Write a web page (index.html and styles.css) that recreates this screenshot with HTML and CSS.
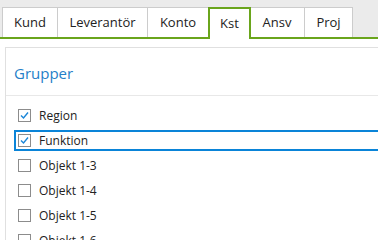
FILE: index.html
```html
<!DOCTYPE html>
<html lang="sv">
<head>
    <meta charset="UTF-8">
    <title>Grupper</title>
    <link rel="stylesheet" href="styles.css">
</head>
<body>
    <div class="flikar">
        <div class="flik">Kund</div>
        <div class="flik">Leverantör</div>
        <div class="flik">Konto</div>
        <div class="flik aktiv">Kst</div>
        <div class="flik">Ansv</div>
        <div class="flik">Proj</div>
    </div>
    <div class="innehall">
        <div class="panel">
            <h2 class="rubrik">Grupper</h2>
            <div class="lista">
                <div class="rad">
                    <span class="ruta vald"><svg viewBox="0 0 13 13" width="13" height="13"><path d="M3 6.5 L5.5 9 L10 3.5" fill="none" stroke="#1a86d8" stroke-width="1.4"/></svg></span>
                    Region
                </div>
                <div class="rad">
                    <div class="fokus">
                        <span class="ruta vald"><svg viewBox="0 0 13 13" width="13" height="13"><path d="M3 6.5 L5.5 9 L10 3.5" fill="none" stroke="#1a86d8" stroke-width="1.4"/></svg></span>
                        Funktion
                    </div>
                </div>
                <div class="rad"><span class="ruta"></span>Objekt 1-3</div>
                <div class="rad"><span class="ruta"></span>Objekt 1-4</div>
                <div class="rad"><span class="ruta"></span>Objekt 1-5</div>
                <div class="rad"><span class="ruta"></span>Objekt 1-6</div>
            </div>
        </div>
    </div>
</body>
</html>
```
FILE: styles.css
```css
body {
    margin: 0;
    background-color: #ebebeb;
    font-family: "Open Sans", "Noto Sans", sans-serif;
    color: #222;
    overflow: hidden;
    width: 378px;
    height: 240px;
}

.flikar {
    display: flex;
    padding-top: 7px;
    padding-left: 2px;
    border-bottom: 2px solid #6aa51c;
}

.flik {
    box-sizing: border-box;
    height: 30px;
    border: 1px solid #cccccc;
    border-bottom: 0;
    margin-left: -1px;
    background-color: white;
    font-size: 13px;
    line-height: 29px;
    text-align: center;
}

.flik:first-child {
    margin-left: 0;
    width: 56px;
}

.flik:nth-child(2) { width: 91px; }
.flik:nth-child(3) { width: 62px; }
.flik:nth-child(5) { width: 56px; }
.flik:nth-child(6) { width: 49px; }

.flik.aktiv {
    width: 43px;
    border: 2px solid #6aa51c;
    border-bottom: 0;
    margin-bottom: -2px;
    height: 32px;
    line-height: 28px;
    position: relative;
    z-index: 1;
}

.flik.aktiv + .flik {
    margin-left: -2px;
}

.innehall {
    background-color: white;
    padding-top: 8px;
    padding-left: 5px;
    height: 200px;
}

.panel {
    width: 420px;
    height: 200px;
    border-top: 1px solid #e0e0e0;
    border-left: 1px solid #e0e0e0;
}

.rubrik {
    margin: 0;
    height: 48px;
    box-sizing: border-box;
    padding-left: 8px;
    padding-top: 15px;
    font-size: 15px;
    font-weight: normal;
    color: #2580c8;
    border-bottom: 1px solid #e8e8e8;
}

.lista {
    padding-top: 7px;
}

.rad {
    height: 25px;
    display: flex;
    align-items: center;
    padding-left: 12px;
    font-size: 12px;
}

.fokus {
    box-sizing: border-box;
    margin-left: -4px;
    padding-left: 2px;
    flex: 1;
    height: 21px;
    border: 2px solid #0a84d8;
    border-right: 0;
    display: flex;
    align-items: center;
}

.ruta {
    box-sizing: border-box;
    width: 13px;
    height: 13px;
    border: 1px solid #8c8c8c;
    margin-right: 8px;
    display: inline-flex;
    background-color: white;
}

.ruta svg {
    margin: -1px;
}
```
